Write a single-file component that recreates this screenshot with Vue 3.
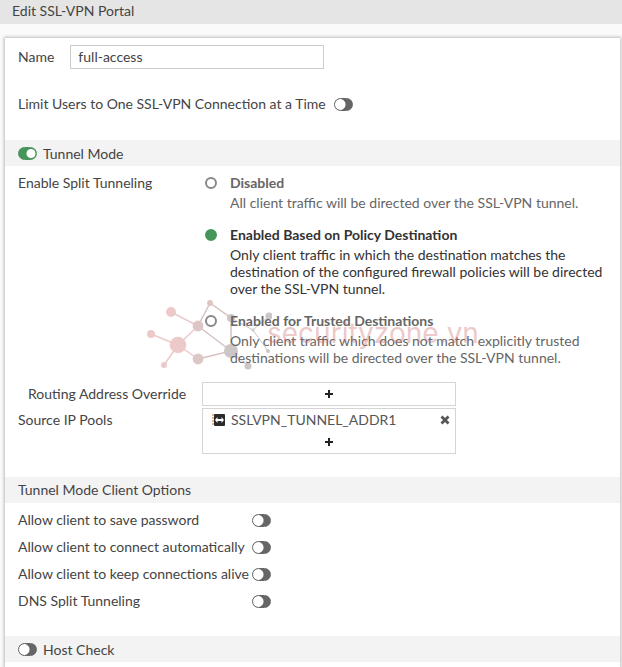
<template>
    <div class="page">
        <header class="title-bar">Edit SSL-VPN Portal</header>

        <form class="panel" @submit.prevent>
            <div class="name-row">
                <label class="label" for="name">Name</label>
                <input id="name" type="text" class="text-box" v-model="name" />
            </div>

            <div class="limit-row">
                <label class="label" for="limit">Limit Users to One SSL-VPN Connection at a Time</label>
                <input id="limit" type="checkbox" class="toggle" v-model="limitUsers" />
            </div>

            <div class="section">
                <input id="tunnel" type="checkbox" class="toggle" v-model="tunnelMode" />
                <label for="tunnel">Tunnel Mode</label>
            </div>

            <div class="split-row" role="radiogroup" aria-labelledby="split-label">
                <span id="split-label">Enable Split Tunneling</span>
                <div class="choices">
                    <label
                        v-for="v in splitModes" :key="v.value"
                        :class="'choice ' + (split == v.value ? 'on' : '')">
                        <input type="radio" name="split" class="radio" :value="v.value" v-model="split" />
                        <span class="choice-text">
                            <span class="choice-title">{{v.title}}</span>
                            <span class="choice-desc">{{v.desc}}</span>
                        </span>
                    </label>
                </div>
                <div class="watermark" aria-hidden="true">
                    <svg width="126" height="72" viewBox="146 297 126 72">
                        <g stroke-width="1.5" fill="none">
                            <path d="M171 311L198 325L178 344L151 333M178 344L164 364M178 344L198 358" stroke="#cf6f6f" />
                            <path d="M198 325L210 302L231 317V350L198 358M198 325L231 350" stroke="#8f5858" />
                            <path d="M231 317L253 329L269 315M253 329L268 350M231 350L248 365" stroke="#666" stroke-width="1" />
                        </g>
                        <g fill="#cf6f6f">
                            <circle cx="171" cy="311" r="5" />
                            <circle cx="151" cy="333" r="4" />
                            <circle cx="178" cy="344" r="8.3" />
                            <circle cx="164" cy="364" r="3" />
                        </g>
                        <g fill="#a26464">
                            <circle cx="198" cy="325" r="5.4" />
                            <circle cx="198" cy="358" r="5.4" />
                            <circle cx="210" cy="302" r="3" />
                        </g>
                        <g fill="#776363">
                            <circle cx="231" cy="350" r="7" />
                            <circle cx="231" cy="317" r="4" />
                            <circle cx="269" cy="315" r="3.5" />
                            <circle cx="253" cy="329" r="1.5" />
                            <circle cx="268" cy="350" r="2" />
                            <circle cx="248" cy="365" r="3.5" />
                        </g>
                    </svg>
                    <span class="brand">securityzone.vn</span>
                </div>
            </div>

            <div class="field-row">
                <span class="indent">Routing Address Override</span>
                <div class="picker">
                    <button type="button" class="add" aria-label="Add routing address">
                        <svg width="8" height="8" viewBox="0 0 8 8"><path d="M4 0V8M0 4H8" stroke="#222" stroke-width="2" /></svg>
                    </button>
                </div>
            </div>
            <div class="field-row">
                <span>Source IP Pools</span>
                <div class="picker">
                    <div class="entry" v-for="(v, i) in pools" :key="v">
                        <svg width="13" height="12" viewBox="0 0 13 12">
                            <path d="M1 0V12" stroke="#e0a060" stroke-width="1.5" stroke-dasharray="2 1" />
                            <rect x="2" width="11" height="12" rx="1" fill="#2b2b2b" />
                            <path d="M3 6L5.500 3V5H9.500V3L12 6L9.500 9V7H5.500V9Z" fill="#fff" />
                        </svg>
                        <span class="entry-name">{{v}}</span>
                        <button type="button" class="remove" aria-label="Remove" @click="pools.splice(i, 1)">
                            <svg width="10" height="10" viewBox="0 0 10 10"><path d="M1.500 1.500L8.500 8.500M8.500 1.500L1.500 8.500" stroke="#555" stroke-width="2.800" /></svg>
                        </button>
                    </div>
                    <button type="button" class="add" aria-label="Add source IP pool">
                        <svg width="8" height="8" viewBox="0 0 8 8"><path d="M4 0V8M0 4H8" stroke="#222" stroke-width="2" /></svg>
                    </button>
                </div>
            </div>

            <div class="section client">Tunnel Mode Client Options</div>
            <div class="options">
                <div class="option-row" v-for="v in clientOptions" :key="v.id">
                    <label class="label" :for="v.id">{{v.label}}</label>
                    <input :id="v.id" type="checkbox" class="toggle" v-model="v.on" />
                </div>
            </div>

            <div class="section">
                <input id="host" type="checkbox" class="toggle" v-model="hostCheck" />
                <label for="host">Host Check</label>
            </div>
        </form>
    </div>
</template>

<script setup>
import { ref } from 'vue'

const name = ref('full-access')
const limitUsers = ref(false)
const tunnelMode = ref(true)
const hostCheck = ref(false)
const split = ref('policy')
const pools = ref(['SSLVPN_TUNNEL_ADDR1'])

const splitModes = [
    {
        value: 'disabled',
        title: 'Disabled',
        desc: 'All client traffic will be directed over the SSL-VPN tunnel.'
    },
    {
        value: 'policy',
        title: 'Enabled Based on Policy Destination',
        desc: 'Only client traffic in which the destination matches the destination of the configured firewall policies will be directed over the SSL-VPN tunnel.'
    },
    {
        value: 'trusted',
        title: 'Enabled for Trusted Destinations',
        desc: 'Only client traffic which does not match explicitly trusted destinations will be directed over the SSL-VPN tunnel.'
    },
]

const clientOptions = ref([
    { id: 'save', label: 'Allow client to save password', on: false },
    { id: 'auto', label: 'Allow client to connect automatically', on: false },
    { id: 'keep', label: 'Allow client to keep connections alive', on: false },
    { id: 'dns', label: 'DNS Split Tunneling', on: false },
])
</script>

<style>
body {background-color: #fafafa;}
</style>

<style scoped>
.page {
    font-family: Lato, "Liberation Sans", sans-serif; font-size: 14px; line-height: 17px; color: #444;
}
.page * {box-sizing: border-box;}
.title-bar {height: 24px; padding: 2px 12px; background-color: #e5e5e5;}
.panel {
    margin: 14px 2px 0 5px; padding: 7px 0 5px; background-color: #fff;
    box-shadow: 0 0 3px 1px rgba(0, 0, 0, .25);
}
.label {padding-bottom: 2px;}

.name-row {display: flex; align-items: center; gap: 16px; padding: 0 13px;}
.text-box {
    width: 254px; height: 24px; padding: 0 7px 2px; border: 1px solid #ccc; background-color: #fff;
    font: inherit; color: inherit; outline: none;
}
.limit-row {display: flex; align-items: center; gap: 8px; height: 71px; padding: 0 13px;}

.section {
    display: flex; align-items: center; gap: 6px; height: 26px; padding: 0 13px; background-color: #f3f3f3;
}
.section.client {margin-top: 23px; padding-bottom: 2px;}

.toggle {
    appearance: none; flex: none; width: 19px; height: 13px; margin: 0; border-radius: 7px; border: 1px solid #666;
    background: radial-gradient(circle at 5px 50%, #fff 5px, #666 6px);
}
.toggle:checked {border-color: #46955a; background: radial-gradient(circle at 12px 50%, #fff 4px, #46955a 5px);}

.split-row {
    position: relative; display: grid; grid-template-columns: 187px minmax(0, 1fr);
    padding: 8px 14px 16px 13px;
}
.choices {display: flex; flex-direction: column; gap: 15px;}
.choice {display: flex; align-items: flex-start; gap: 13px; color: #666;}
.choice.on {color: #333;}
.choice-text {display: flex; flex-direction: column; gap: 3px;}
.choice-title {font-weight: bold;}
.radio {
    appearance: none; flex: none; width: 12px; height: 12px; margin: 3px 0 0; border-radius: 50%;
    border: 2px solid #888; background-color: #fff;
}
.radio:checked {border-color: #46955a; background-color: #46955a;}

.watermark {
    position: absolute; left: 141px; top: 132px; display: flex; align-items: center;
    opacity: .36; pointer-events: none;
}
.brand {margin-left: -5px; padding-bottom: 2px; font-family: Inter, sans-serif; font-size: 28px; line-height: 32px; color: #cf6f6f;}

.field-row {display: grid; grid-template-columns: 184px 254px; padding: 0 13px; line-height: 24px;}
.field-row + .field-row {margin-top: 2px;}
.indent {padding-left: 10px;}
.picker {display: flex; flex-direction: column; border: 1px solid #d5d5d5; background-color: #fff;}
.entry {display: flex; align-items: center; height: 22px; padding: 0 5px 0 9px;}
.entry-name {flex: 1; padding-left: 6px; color: #555;}
.add, .remove {display: flex; align-items: center; justify-content: center; padding: 0; border: 0; background: none;}
.add {height: 22px;}

.options {padding: 4px 13px 21px;}
.option-row {display: grid; grid-template-columns: 234px 19px; align-items: center; height: 27px;}
</style>
